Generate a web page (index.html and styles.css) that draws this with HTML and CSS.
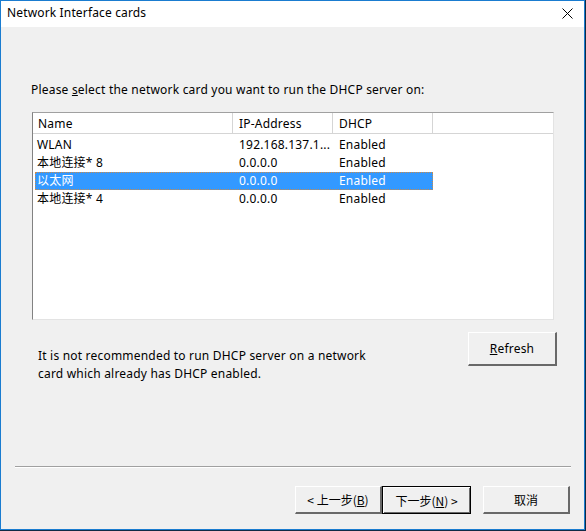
FILE: index.html
```html
<!DOCTYPE html>
<html>
<head>
<meta charset="utf-8">
<link rel="stylesheet" href="styles.css">
</head>
<body>
<div class="window">
  <div class="titlebar">
    <span class="title">Network Interface cards</span>
    <svg class="close" width="11" height="11" viewBox="0 0 11 11"><path d="M0.5 0.5 L10.5 10.5 M10.5 0.5 L0.5 10.5" stroke="#000" stroke-width="1" fill="none"/></svg>
  </div>
  <div class="content">
    <div class="prompt">Please <u>s</u>elect the network card you want to run the DHCP server on:</div>
    <div class="list">
      <div class="header">
        <div class="hcell c1">Name</div>
        <div class="hcell c2">IP-Address</div>
        <div class="hcell c3">DHCP</div>
      </div>
      <div class="rows">
        <div class="row"><span class="cell r1">WLAN</span><span class="cell r2">192.168.137.1...</span><span class="cell r3">Enabled</span></div>
        <div class="row"><span class="cell r1">本地连接* 8</span><span class="cell r2">0.0.0.0</span><span class="cell r3">Enabled</span></div>
        <div class="row selected"><span class="cell r1">以太网</span><span class="cell r2">0.0.0.0</span><span class="cell r3">Enabled</span></div>
        <div class="row"><span class="cell r1">本地连接* 4</span><span class="cell r2">0.0.0.0</span><span class="cell r3">Enabled</span></div>
      </div>
    </div>
    <div class="middle">
      <p class="note">It is not recommended to run DHCP server on a network<br>card which already has DHCP enabled.</p>
      <button class="btn refresh"><u>R</u>efresh</button>
    </div>
    <div class="separator"></div>
    <div class="footer">
      <div class="navpair">
        <button class="btn cjk back">&lt; 上一步(<u>B</u>)</button>
        <button class="btn cjk next">下一步(<u>N</u>) &gt;</button>
      </div>
      <button class="btn cjk cancel">取消</button>
    </div>
  </div>
</div>
</body>
</html>
```
FILE: styles.css
```css
* { box-sizing: border-box; }
html, body {
  margin: 0;
  padding: 0;
}
body {
  width: 586px;
  height: 531px;
  background: #0f2b45;
  font-family: "Noto Sans", "Noto Sans CJK SC", sans-serif;
  font-size: 12px;
  letter-spacing: 0.2px;
  color: #000;
  overflow: hidden;
}
.window {
  width: 585px;
  height: 530px;
  border: 1px solid #1a7cd0;
  background: #f0f0f0;
  display: flex;
  flex-direction: column;
}
.titlebar {
  height: 26px;
  background: #fff;
  display: flex;
  align-items: center;
  justify-content: space-between;
  padding-left: 6px;
  padding-right: 11px;
  flex-shrink: 0;
}
.title {
  font-size: 12px;
  line-height: 16px;
  letter-spacing: 0.15px;
  margin-top: -2px;
}
.close {
  display: block;
  margin-top: -2px;
}
.content {
  flex: 1;
  display: flex;
  flex-direction: column;
  padding: 54px 0 0 30px;
}
.prompt {
  line-height: 18px;
  height: 18px;
}
.list {
  margin-top: 13px;
  margin-left: 1px;
  width: 522px;
  height: 208px;
  background: #fff;
  border-top: 1px solid #a0a0a0;
  border-left: 1px solid #828282;
  border-right: 1px solid #e3e3e3;
  border-bottom: 1px solid #e3e3e3;
  display: flex;
  flex-direction: column;
  flex-shrink: 0;
}
.header {
  display: flex;
  height: 21px;
  border-bottom: 1px solid #d5d5d5;
  background: #fff;
  flex-shrink: 0;
}
.hcell {
  line-height: 21px;
  border-right: 1px solid #d5d5d5;
  padding-left: 6px;
}
.hcell.c1 { width: 200px; padding-left: 5px; }
.hcell.c2 { width: 100px; }
.hcell.c3 { width: 100px; }
.rows {
  padding-top: 2px;
  padding-left: 2px;
}
.row {
  display: flex;
  height: 18px;
  line-height: 18px;
  width: 398px;
}
.row.selected {
  background: #3399ff;
  color: #fff;
  outline: 1px dotted #c98a4a;
  outline-offset: -1px;
}
.cell { white-space: nowrap; overflow: hidden; }
.cell.r1 { width: 198px; padding-left: 2px; }
.cell.r2 { width: 100px; padding-left: 6px; }
.cell.r3 { width: 100px; padding-left: 6px; }
.middle {
  display: flex;
  justify-content: space-between;
  align-items: flex-start;
  margin-top: 12px;
  width: 526px;
  height: 50px;
  flex-shrink: 0;
}
.note {
  margin: 15px 0 0 7px;
  line-height: 18px;
}
.btn {
  font-family: "Noto Sans", "Noto Sans CJK SC", sans-serif;
  font-size: 12px;
  letter-spacing: 0.2px;
  color: #000;
  background: #f0f0f0;
  border-style: solid;
  border-width: 1px 2px 2px 1px;
  border-color: #ffffff #696969 #696969 #ffffff;
  padding: 0;
  margin: 0;
}
.btn.refresh {
  width: 89px;
  height: 34px;
}
.separator {
  margin-top: 84px;
  margin-left: -16px;
  width: 556px;
  height: 1px;
  background: #a0a0a0;
  box-shadow: 0 1px 0 #fff;
  flex-shrink: 0;
}
.footer {
  margin-top: 19px;
  display: flex;
  gap: 12px;
  margin-left: 264px;
}
.navpair {
  display: flex;
}
.cjk {
  font-family: "Noto Sans CJK SC", sans-serif;
  letter-spacing: 0;
}
.btn.back, .btn.next, .btn.cancel {
  height: 28px;
  width: 87px;
}
.btn.next {
  width: 89px;
  border: 1px solid #000;
  box-shadow: inset 1px 1px 0 #fff, inset -1px -1px 0 #696969;
}
```
